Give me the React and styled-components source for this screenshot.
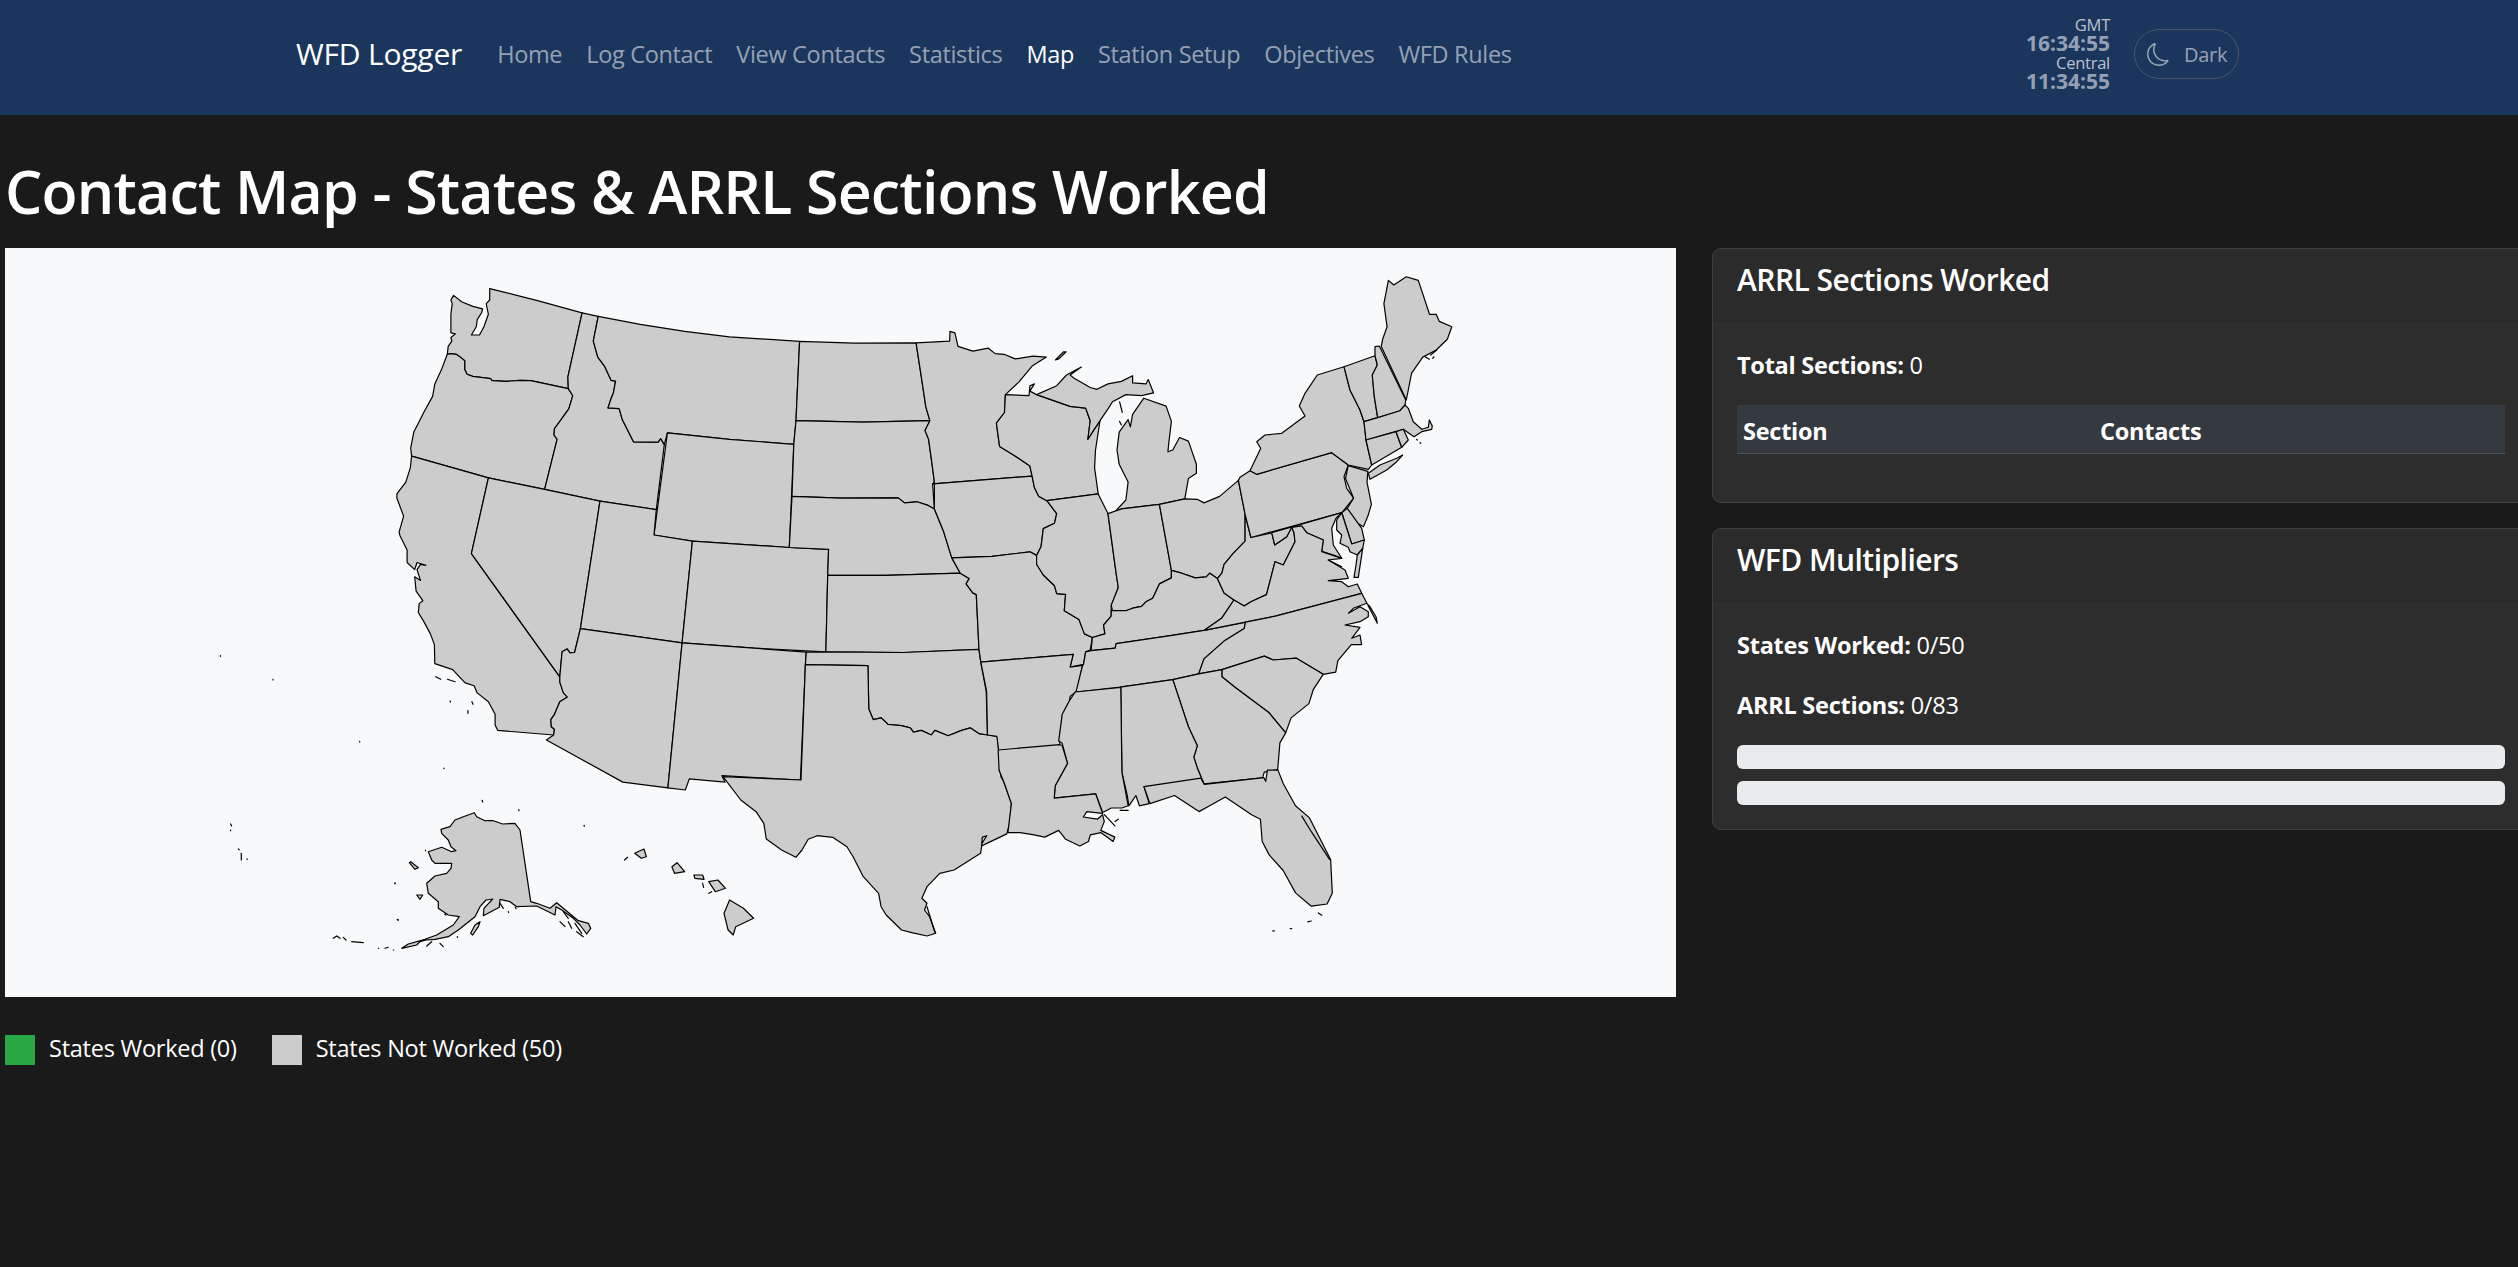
import styled, { createGlobalStyle } from 'styled-components';
import { BsMoon } from 'react-icons/bs';

const GlobalStyle = createGlobalStyle`
    html, body {
        margin: 0;
        padding: 0;
        background: #1a1a1a;
        overflow-x: hidden;
    }
    body {
        font-family: "Open Sans", "Noto Sans", sans-serif;
        font-size: 23.5px;
        letter-spacing: -0.25px;
        line-height: 36px;
        color: #fff;
        min-height: 100vh;
    }
`

const Navbar = styled.nav`
    background: #1a365d;
    height: 115px;
`

const NavInner = styled.div`
    width: 1980px;
    height: 100%;
    margin: 0 auto;
    padding: 0 10px 7px 27px;
    box-sizing: border-box;
    display: flex;
    align-items: center;
`

const Brand = styled.span`
    font-size: 30px;
    letter-spacing: -0.2px;
    color: #fff;
    margin-right: 35px;
`

const NavLinks = styled.div`
    display: flex;
    gap: 24px;
    flex: 1;
`

const NavLink = styled.span`
    letter-spacing: -0.33px;
    color: ${props => props.$active ? '#fff' : 'rgba(255, 255, 255, 0.55)'};
`

const Clock = styled.div`
    display: flex;
    flex-direction: column;
    align-items: flex-end;
    margin: 0 24px 3px 0;
`

const ClockLabel = styled.span`
    font-size: 16.5px;
    line-height: 19px;
    color: rgba(255, 255, 255, 0.7);
`

const ClockTime = styled.span`
    font-size: 21px;
    line-height: 19px;
    font-weight: 700;
    letter-spacing: 0;
    color: rgba(255, 255, 255, 0.55);
`

const ThemeButton = styled.button`
    display: flex;
    align-items: center;
    gap: 14px;
    height: 50px;
    width: 105px;
    padding: 0 0 0 12px;
    box-sizing: border-box;
    background: transparent;
    border: 1.5px solid #4a5568;
    border-radius: 25px;
    color: rgba(255, 255, 255, 0.55);
    font-family: inherit;
    font-size: 20px;
    letter-spacing: -0.3px;
`

const Main = styled.main`
    padding-left: 5px;
`

const Title = styled.h1`
    margin: 40px 0 21px;
    font-size: 59px;
    line-height: 72px;
    font-weight: 600;
    letter-spacing: -0.8px;
`

const Columns = styled.div`
    display: grid;
    grid-template-columns: 1671px 818px;
    column-gap: 36px;
    align-items: start;
`

const MapBox = styled.div`
    height: 749px;
    background: #f8f9fa;
`

const MapSvg = styled.svg`
    display: block;
    width: 100%;
    height: 100%;
`

const Legend = styled.div`
    display: flex;
    gap: 35px;
    margin-top: 38px;
`

const LegendItem = styled.div`
    display: flex;
    align-items: center;
    gap: 14px;
    height: 30px;
`

const LegendLabel = styled.span`
    margin-bottom: 5px;
`

const Swatch = styled.span`
    width: 30px;
    height: 30px;
    background: ${props => props.$color};
`

const Side = styled.div`
    display: flex;
    flex-direction: column;
    gap: 25px;
`

const Card = styled.section`
    background: #2d2d2d;
    border: 1.5px solid #404040;
    border-radius: 9px;
`

const CardHeader = styled.header`
    height: 73px;
    padding: 13px 24px 11px;
    box-sizing: border-box;
    background: rgba(0, 0, 0, 0.03);
    border-bottom: 1.5px solid #262626;
`

const CardTitle = styled.h5`
    margin: 0;
    font-size: 30px;
    line-height: 36px;
    font-weight: 600;
    letter-spacing: -0.55px;
`

const CardBody = styled.div`
    padding: 23px 24px 24px;
    width: 768px;
`

const Line = styled.p`
    margin: 0 0 22px;
    padding-top: 2px;
`

const TableHead = styled.div`
    display: grid;
    grid-template-columns: 357px 1fr;
    padding: 8px 6px 4px;
    height: 48.5px;
    box-sizing: border-box;
    margin-bottom: 24px;
    background: #343a40;
    border-bottom: 1.5px solid #4b545c;
    font-weight: 700;
`

const Progress = styled.div`
    height: 24px;
    border-radius: 6px;
    background: #e9ecef;
    margin-top: ${props => props.$first ? 0 : '12px'};
`

/* each trace is read off a different crop of the map, so every frame holds
   [left, top, x scale, y scale] for that crop */
const FRAMES = {
    A: [350, 250, 2.24, 2.8],
    B: [800, 250, 2.24, 2.8],
    C: [950, 250, 2.851, 2.24],
    D: [200, 640, 1.96, 3],
    E: [320, 800, 3, 3],
    F: [1240, 340, 3, 3],
    G: [1270, 490, 3, 3],
}

const toPoints = (frame, text) => {
    const [left, top, sx, sy] = FRAMES[frame]
    const n = text.trim().split(/\s+/).map(Number)
    const out = []
    for (let i = 0; i < n.length; i += 2) {
        out.push(`${(left + n[i] / sx).toFixed(1)} ${(top + n[i + 1] / sy).toFixed(1)}`)
    }
    return out
}

const shape = (...parts) => {
    const pts = []
    for (let i = 0; i < parts.length; i += 2) pts.push(...toPoints(parts[i], parts[i + 1]))
    return `M${pts.join('L')}Z`
}

const line = (frame, text) => `M${toPoints(frame, text).join('L')}`

const STATES = [
    shape('A', '313 108 420 142 520 176 488 355 489 388 405 366 380 365 350 368 318 366 315 360 275 354 262 348 257 335 257 310 245 298 238 292 225 290 218 292 220 270 228 255 226 245 236 235 226 232 226 180 229 150 226 140 232 127 250 145 275 158 297 165 295 175 285 195 283 215 272 238 290 238 300 215 310 180 305 150 313 140'),
    shape('A', '218 292 225 290 238 292 245 298 257 310 257 335 262 348 275 354 315 360 318 366 350 368 380 365 405 366 489 388 499 408 490 445 470 480 458 500 457 518 464 530 436 670 310 638 138 577 136 555 143 510 155 480 165 455 185 410 190 375 205 335'),
    shape('A', '138 577 310 638 272 850 470 1195 470 1210 478 1240 487 1252 470 1265 458 1300 450 1315 451 1335 458 1342 456 1358 331 1345 325 1330 325 1300 310 1265 285 1240 278 1220 258 1212 245 1195 230 1175 190 1158 189 1105 180 1075 165 1040 153 1015 155 990 163 982 148 955 145 915 158 925 150 895 158 880 170 883 150 875 145 895 128 875 128 840 112 800 110 790 120 745 105 695 105 683 125 650 135 610'),
    shape('A', '520 176 556 186 545 255 555 300 570 325 585 365 595 367 590 400 585 415 578 442 603 444 610 475 635 537 690 538 696 528 704 545 686 727 560 703 436 670 464 530 457 518 458 500 470 480 490 445 499 408 489 388 488 355'),
    shape('A', '556 186 650 208 750 228 850 243 1007 256 999 478 994 544 850 530 711 512 704 545 696 528 690 538 635 537 610 475 603 444 578 442 585 415 590 400 595 367 585 365 570 325 555 300 545 255'),
    shape('A', '711 512 850 530 994 544 984 833 767 815 681 798'),
    shape('A', '310 638 436 670 560 703 516 1060 503 1127 493 1128 486 1117 475 1125 470 1195 272 850'),
    shape('A', '560 703 686 727 681 798 767 815 744 1100 516 1060'),
    shape('A', '767 815 984 833 1072 838 1070 911 1066 1125 905 1115 744 1100'),
    shape('A', '516 1060 744 1100 712 1506 611 1490 440 1372 456 1358 458 1342 451 1335 450 1315 458 1300 470 1265 487 1252 478 1240 470 1210 470 1195 475 1125 486 1117 493 1128 503 1127'),
    shape('A', '744 1100 905 1115 1022 1126 1020 1161 1009 1484 833 1472 840 1490 760 1481 751 1512 712 1506'),
    shape('A', '1007 256 1130 261 1268 260 1278 340 1290 440 1299 478 1150 482 999 478'),
    shape('A', '999 478 1150 482 1299 478 1288 505 1296 530 1304 600 1309 650 1305 655 1309 725 1295 715 1270 705 1242 708 1228 694 1100 695 990 690 994 544'),
    shape('A', '990 690 1100 695 1228 694 1242 708 1270 705 1295 715 1309 725 1330 790 1340 830 1348 862 1367 905 1200 911 1070 911 1072 838 984 833'),
    shape('A', '1070 911 1200 911 1367 905 1387 920 1380 935 1395 960 1403 965 1409 1118 1240 1127 1066 1125'),
    shape('A', '1022 1126 1066 1125 1240 1127 1409 1118 1413 1155 1425 1235 1428 1358 1410 1355 1390 1338 1370 1345 1340 1360 1310 1345 1302 1358 1280 1345 1262 1350 1255 1338 1235 1332 1205 1328 1190 1310 1172 1315 1162 1285 1160 1164 1020 1161'),
    shape('A', '1020 1161 1160 1164 1162 1285 1172 1315 1190 1310 1205 1328 1235 1332 1255 1338 1262 1350 1280 1345 1302 1358 1310 1345 1340 1360 1370 1345 1390 1338 1410 1355 1428 1358 1450 1362 1453 1402 1458 1475 1470 1500 1483 1550',
        'C', '140 1165 155 1195 175 1240 170 1285 162 1308 108 1328 90 1335 92 1315 105 1312',
        'D', '1533 610 1530 640 1478 690 1450 700 1425 740 1415 775 1425 790 1420 810 1430 830 1442 880 1425 888 1395 878 1375 870 1345 825 1335 800 1330 760 1300 710 1280 650 1268 620 1240 592 1210 587 1192 598 1180 630 1168 652 1140 630 1110 597 1105 550 1090 515 1060 480 1025 410 1178 420'),
    shape('B', '260 260 335 255 336 228 347 232 354 270 387 283 422 275 437 290 457 292 482 305 522 297 552 300 520 325 490 370 460 405 458 455 440 485 447 550 480 575 515 605 520 633 298 655 301 650 296 600 288 530 280 505 291 478 282 440 270 340'),
    shape('B', '298 655 520 633 525 665 535 690 553 702 575 738 570 765 545 780 540 830 530 855 515 845 430 858 340 862 332 830 322 790 301 725 301 650'),
    shape('B', '340 862 430 858 515 845 530 855 530 880 545 910 570 940 575 962 595 964 592 1010 625 1035 637 1075 655 1085 650 1120 640 1125 635 1160 605 1168 612 1132 405 1154 401 1118 395 965 387 960 372 935 379 920 359 905'),
    shape('B', '405 1154 612 1132 605 1168 633 1163 620 1235 605 1250 603 1275 588 1305 582 1360 582 1387 445 1402 441 1362 420 1358 418 1235'),
    shape('B', '460 405 513 408 515 380 525 375 515 395 530 405 605 438 640 443 650 478 645 530 655 510 672 478 662 560 660 610 668 683 553 702 535 690 525 665 520 633 515 605 480 575 447 550 440 485 458 455'),
    shape('B', '530 405 575 380 597 350 630 328 605 350 615 360 650 385 665 390 690 375 720 368 745 352 745 372 775 375 780 363 792 400 765 408 730 405 700 425 690 445 672 478 655 510 645 530 650 478 640 443 605 438'),
    shape('B', '770 415 820 437 832 480 826 540 824 565 835 560 850 525 870 535 888 600 888 625 870 640 862 697 805 712 720 725 700 740 730 700 735 650 715 600 710 560 715 510 735 475 740 495 745 460'),
    shape('B', '553 702 668 683 690 738 708 905 713 945 697 995 697 1025 680 1050 683 1075 655 1085 637 1075 625 1035 592 1010 595 964 575 962 570 940 545 910 530 880 530 855 540 830 545 780 570 765 575 738'),
    shape('B', '690 738 720 725 805 712 832 897 832 918 805 935 790 975 775 985 765 998 745 1003 730 1010 700 1010 697 995 713 945 708 905'),
    shape('B', '805 712 862 697 890 698 905 708 940 690 982 645 997 740 997 815 970 850 950 880 945 905 935 920 918 905 910 915 885 918 855 905 832 897'),
    shape('B', '655 1085 683 1075 680 1050 697 1025 697 1010 730 1010 745 1003 765 998 775 985 790 975 805 935 832 918 832 897 855 905 885 918 910 915 918 905 935 920 950 960 972 980 945 1030 905 1065 830 1080 708 1102 706 1115 652 1122'),
    shape('B', '640 1125 652 1122 706 1115 708 1102 830 1080 905 1065 998 1042 995 1060 950 1095 905 1145 893 1187 835 1203 717 1224 618 1238 633 1163 635 1160'),
    shape('B', '997 740 1010 805 1057 792', 'G', '14 165 50 140 65 112 72 128 75 155 40 225 15 215', 'B', '1045 965 1010 985 995 997 972 980 950 960 935 920 945 905 950 880 970 850 997 815'),
    shape('F', '0 412 30 392 50 403 275 338 325 375 312 410 320 445', 'B', '1240 695 1214 735 1010 805 997 740 982 645'),
    shape('F', '30 392 50 350 62 325 50 305 75 285 125 280 195 228 178 198 195 160 232 105 312 80 330 150 360 210 372 245 378 300 395 375 385 388 325 375 275 338 50 403'),
    shape('F', '385 400 420 375 470 355 488 345 470 365 440 390 390 418'),
    shape('F', '312 80 405 47 412 75 397 105 403 170 413 233 372 245 360 210 330 150'),
    shape('F', '405 47 405 20 418 18 497 180 495 195 480 212 413 233 403 170 397 105 412 75'),
    shape('B', '1302 270 1305 250 1315 215 1308 150 1318 85 1330 98 1358 75 1385 85 1410 180 1425 180 1432 200 1460 215 1450 250 1425 280 1395 300 1370 345 1358 420'),
    shape('F', '372 245 413 233 480 212 495 195 505 205 520 245 545 268 565 262 568 240 577 258 575 268 545 275 522 290 510 282 490 268 378 300'),
    shape('F', '378 300 468 275 485 322 395 375'),
    shape('F', '468 275 490 268 505 300 485 322'),
    shape('B', '1228 604 1272 620 1270 650 1280 712 1272 745 1262 775 1235 755 1225 725 1240 695 1222 640'),
    shape('G', '215 68 232 55 275 115 283 150 245 162'),
    shape('G', '5 128 14 165 50 140 65 112 95 108 110 128 160 150 155 185 190 195 215 205 190 165 185 115 198 85 215 68'),
    shape('G', '215 68 245 162 283 150 278 175 262 195 240 185 235 172 210 160 215 135 200 120 200 90'),
    shape('G', '262 195 278 175 265 262 252 262 258 225'),
    shape('B', '905 1065 945 1030 972 980 995 997 1010 985 1045 965',
        'G', '15 215 40 225 75 155 72 128 65 112 95 108 110 128 160 150 155 185 215 205 175 210 225 240 235 265 175 272 215 275 235 290 262 282 275 310',
        'B', '1065 1025 998 1042'),
    shape('B', '893 1187 905 1145 950 1095 995 1060 998 1042 1065 1025',
        'G', '275 310 322 400 318 380 300 350 290 340 250 355 235 370 270 350 295 365 295 380 270 395 225 405 270 412 245 445 270 435',
        'B', '1258 1105 1235 1105 1205 1150 1200 1182 1172 1188 1112 1143 1060 1148 1040 1137 945 1175'),
    shape('B', '945 1175 1040 1137 1060 1148 1112 1143 1172 1188 1150 1230 1140 1270 1100 1310 1088 1352 1050 1295 975 1225 945 1195'),
    shape('B', '835 1203 893 1187 945 1175 945 1195 975 1225 1050 1295 1088 1352 1075 1380 1070 1455 1040 1462 1036 1478 905 1495 890 1450 882 1420 890 1388 870 1335'),
    shape('B', '717 1224 835 1203 870 1335 890 1388 882 1420 890 1450 905 1495', 'C', '725 1197 553 1202 568 1240 540 1245 530 1222 510 1245 505 1220 490 1170 487 980'),
    shape('C', '357 990 487 980 490 1170 508 1245 490 1250 460 1250 435 1260 415 1218 297 1228 300 1200 335 1150 320 1105 310 1100 320 1040 340 1010'),
    shape('C', '137 1120 312 1108 320 1110 335 1150 300 1200 297 1228 415 1218 435 1262 390 1258 380 1270 420 1275 435 1265 440 1280 430 1300 470 1315 465 1325 430 1305 400 1310 395 1325 370 1335 330 1320 310 1300 270 1315 240 1310 200 1305 165 1305 175 1240 155 1195 140 1165'),
    shape('C', '553 1202 715 1183 725 1197 895 1182 900 1190 905 1165 935 1165 950 1195 985 1245 1025 1272 1085 1365 1090 1440 1075 1465 1030 1470 985 1440 950 1390 910 1355 890 1325 885 1275 860 1265 785 1225 740 1245 710 1258 640 1222 570 1240'),
    shape('B', '572 308 590 285 596 285 580 305'),
    // alaska
    shape('E', '463 38 470 50 495 62 520 62 548 72 585 70 600 90 632 305 650 310 690 325 710 308 775 362 805 370 812 385 800 402 780 375 760 355 725 330 708 320 705 345 650 318 590 320 570 305 540 298 538 322 490 347 492 325 518 297 498 300 480 320 465 350 415 390 385 410 345 418 318 420 300 425 290 435 245 445 265 432 315 418 350 405 400 375 418 350 385 345 355 325 355 305 325 280 320 250 345 228 380 220 393 205 395 190 345 190 335 180 325 155 365 142 395 155 408 152 393 140 385 120 365 100 363 88 390 80 405 60 430 50'),
    shape('E', '268 188 272 185 295 203 285 208'),
    shape('E', '290 285 308 285 300 298'),
    shape('E', '452 400 465 375 480 365 475 380 458 405'),
    // hawaii
    shape('D', '1038 780 1065 805 1085 835 1050 860 1045 885 1035 870 1027 820'),
    shape('D', '997 725 1015 720 1030 745 1010 755'),
    shape('D', '925 680 935 668 950 695 930 700'),
    shape('D', '968 705 985 705 988 718 970 715'),
    shape('D', '852 640 870 627 875 650 865 655'),
]

// the specks of small islands and the inlets of the coast are only short strokes
const SPECKS = [
    line('D', '462 110 472 118'), line('D', '485 118 500 125'), line('D', '490 183 491 186'), line('D', '533 185 535 193'),
    line('D', '525 212 525 220'), line('D', '40 47 40 49'), line('D', '143 118 143 120'), line('D', '313 304 313 306'),
    line('D', '478 384 478 386'), line('D', '553 481 554 486'), line('D', '625 509 625 512'), line('D', '753 556 753 559'),
    line('D', '60 552 62 558'), line('D', '60 570 60 572'), line('D', '75 627 77 629'), line('D', '81 640 81 660'),
    line('D', '92 657 93 658'), line('D', '388 839 388 841'), line('D', '382 729 382 731'), line('D', '442 630 442 632'),
    line('D', '832 660 838 652'), line('D', '985 730 987 742'), line('D', '997 760 1003 755'), line('D', '1425 800 1440 875'),
    line('E', '40 415 50 408 60 415'), line('E', '70 412 78 420'), line('E', '95 425 130 428'), line('E', '175 445 176 445'),
    line('E', '195 445 205 442'), line('E', '220 450 221 450'), line('E', '320 438 335 425'), line('E', '360 430 370 440'),
    line('E', '720 365 735 380'), line('E', '745 365 755 385'), line('E', '765 370 785 400'), line('E', '730 335 745 355'),
    line('E', '770 395 790 410'), line('E', '540 310 550 325'), line('E', '565 335 566 337'), line('E', '586 322 588 326'),
    line('E', '412 410 413 412'), line('E', '374 342 378 345'), line('E', '232 358 235 360'), line('E', '225 249 226 250'),
    line('F', '555 50 568 58'), line('F', '572 45 590 30'), line('F', '578 55 582 50'), line('F', '530 298 532 300'), line('F', '540 308 542 310'),
    line('C', '1020 1505 1030 1503'), line('C', '970 1520 974 1520'), line('C', '920 1525 925 1525'),
    line('C', '1050 1485 1060 1490'), line('C', '1003 1268 1030 1303 1082 1365'),
    line('C', '440 1265 470 1290'), line('C', '485 1255 508 1255'), line('C', '470 1280 480 1275'),
    line('G', '175 210 215 230'), line('G', '160 185 215 205'),
    line('B', '716 425 722 455'), line('B', '716 480 720 490'),
]

const NAV = ['Home', 'Log Contact', 'View Contacts', 'Statistics', 'Map', 'Station Setup', 'Objectives', 'WFD Rules']

const UsMap = () => (
    <MapSvg viewBox="5 248 1671 749">
        <g fill="#cccccc" stroke="#000" strokeWidth="1.2" strokeLinejoin="round">
            {STATES.map((d, i) => <path key={i} d={d} />)}
        </g>
        <g fill="none" stroke="#000" strokeWidth="1.2" strokeLinecap="round">
            {SPECKS.map((d, i) => <path key={i} d={d} />)}
        </g>
    </MapSvg>
)

const App = () => {
    return (
        <>
            <GlobalStyle />
            <Navbar>
                <NavInner>
                    <Brand>WFD Logger</Brand>
                    <NavLinks>
                        {NAV.map(name => <NavLink key={name} $active={name === 'Map'}>{name}</NavLink>)}
                    </NavLinks>
                    <Clock>
                        <ClockLabel>GMT</ClockLabel>
                        <ClockTime>16:34:55</ClockTime>
                        <ClockLabel>Central</ClockLabel>
                        <ClockTime>11:34:55</ClockTime>
                    </Clock>
                    <ThemeButton><BsMoon size={23} />Dark</ThemeButton>
                </NavInner>
            </Navbar>
            <Main>
                <Title>Contact Map - States &amp; ARRL Sections Worked</Title>
                <Columns>
                    <div>
                        <MapBox><UsMap /></MapBox>
                        <Legend>
                            <LegendItem><Swatch $color="#28a745" /><LegendLabel>States Worked (0)</LegendLabel></LegendItem>
                            <LegendItem><Swatch $color="#cccccc" /><LegendLabel>States Not Worked (50)</LegendLabel></LegendItem>
                        </Legend>
                    </div>
                    <Side>
                        <Card>
                            <CardHeader><CardTitle>ARRL Sections Worked</CardTitle></CardHeader>
                            <CardBody>
                                <Line><strong>Total Sections:</strong> 0</Line>
                                <TableHead>
                                    <span>Section</span>
                                    <span>Contacts</span>
                                </TableHead>
                            </CardBody>
                        </Card>
                        <Card>
                            <CardHeader><CardTitle>WFD Multipliers</CardTitle></CardHeader>
                            <CardBody>
                                <Line><strong>States Worked:</strong> 0/50</Line>
                                <Line><strong>ARRL Sections:</strong> 0/83</Line>
                                <Progress $first />
                                <Progress />
                            </CardBody>
                        </Card>
                    </Side>
                </Columns>
            </Main>
        </>
    )
}

export default App;
